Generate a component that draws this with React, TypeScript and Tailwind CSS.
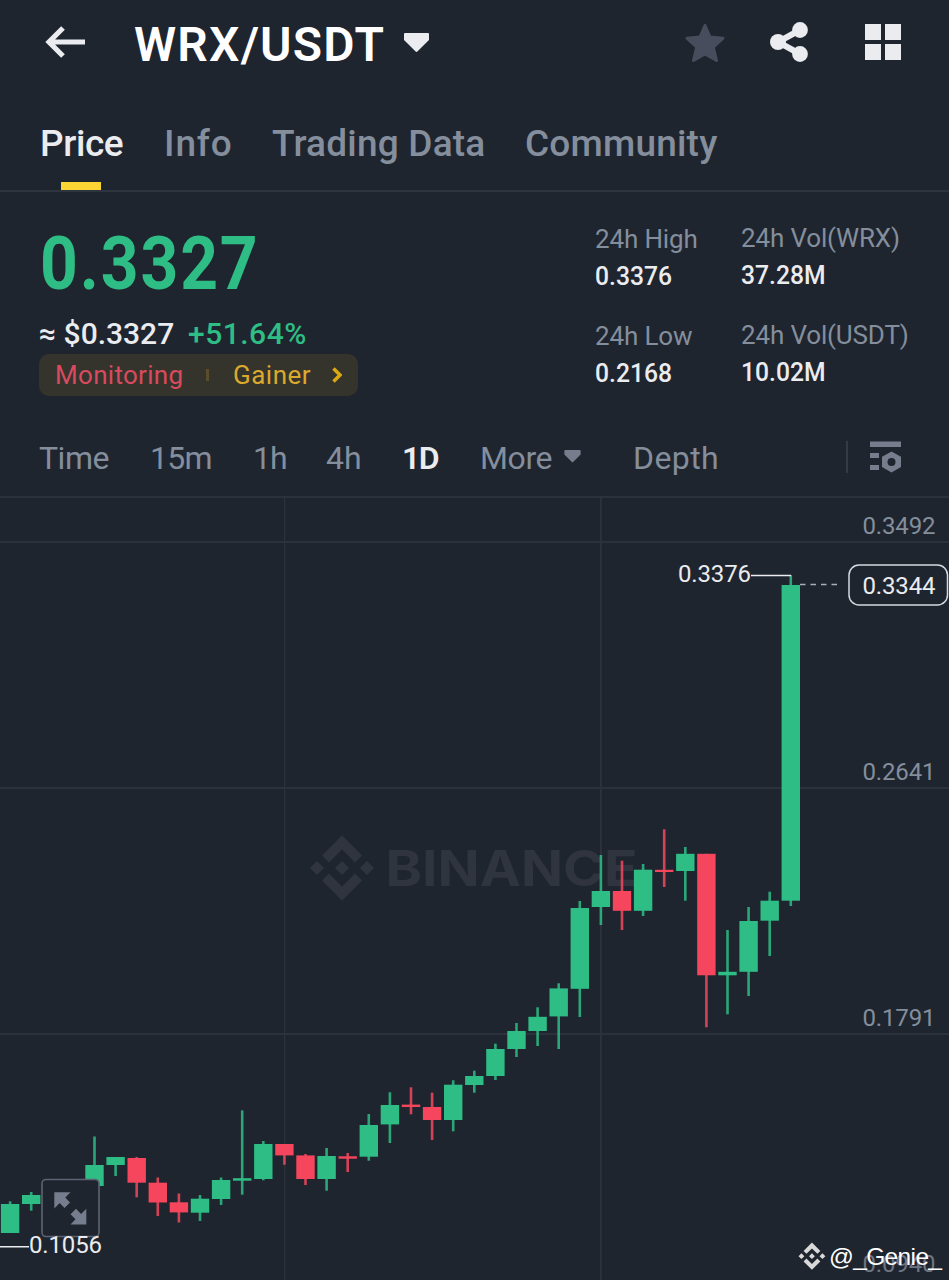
import React from "react";

type Candle = [top: number, bottom: number, high: number, low: number, up: 0 | 1];

// Pixel rows of each candle: body top, body bottom, wick top, wick bottom, rising
const candles: (Candle | null)[] = [
  [1204, 1233, 1201.3, 1233, 1],
  [1195, 1204, 1192, 1210.7, 1],
  null,
  null,
  [1165, 1186, 1136.5, 1186, 1],
  [1157, 1165, 1157, 1176, 1],
  [1158, 1182.7, 1157, 1197.3, 0],
  [1182.7, 1202.5, 1177.5, 1216, 0],
  [1202.3, 1212.4, 1193.5, 1222.5, 0],
  [1198.7, 1212.7, 1195, 1221, 1],
  [1180, 1199, 1177.5, 1205, 1],
  [1178.2, 1180.7, 1110.4, 1194.7, 1],
  [1144, 1179, 1141, 1180.3, 1],
  [1144, 1155.4, 1144, 1164.7, 0],
  [1155.4, 1179, 1154, 1185, 0],
  [1156, 1179, 1148, 1190.7, 1],
  [1156.3, 1158.7, 1153, 1172, 0],
  [1125, 1156.7, 1114, 1160.7, 1],
  [1105, 1124.4, 1092.3, 1143, 1],
  [1104.6, 1107, 1087.3, 1114.3, 0],
  [1107, 1120, 1092.7, 1140, 0],
  [1084.7, 1120, 1080.3, 1131.3, 1],
  [1076, 1085, 1070.7, 1092.7, 1],
  [1049, 1076, 1043.7, 1080, 1],
  [1031, 1049, 1023, 1057, 1],
  [1016.8, 1031, 1007.3, 1046, 1],
  [988.4, 1016.4, 983.3, 1049, 1],
  [908, 988.8, 901, 1017, 1],
  [891, 907, 855, 925, 1],
  [891, 910.8, 860.7, 930, 0],
  [869.7, 910.8, 864, 916, 1],
  [869.8, 872, 829.3, 887, 0],
  [853.8, 871, 847, 900.7, 1],
  [853.8, 975.3, 853.8, 1027.3, 0],
  [971.8, 975.3, 930, 1014.3, 1],
  [921, 971.8, 907, 996, 1],
  [900.7, 920.7, 891.7, 956, 1],
  [585, 900.7, 575, 906, 1],
];

const Caret = ({ className }: { className: string }) => (
  <svg viewBox="0 0 25 20" className={className} fill="currentColor">
    <path d="M0 1Q0 0 1 0H24Q25 0 25 1V7L13.4 18.6Q12.5 19.5 11.6 18.6L0 7Z" />
  </svg>
);

const BinanceMark = () => (
  <>
    <path d="M32 0 52 20 45 27 32 14 19 27 12 20Z" />
    <path d="M32 65 52 45 45 38 32 51 19 38 12 45Z" />
    <path d="M7 25.5 14 32.5 7 39.5 0 32.5Z" />
    <path d="M57 25.5 64 32.5 57 39.5 50 32.5Z" />
    <path d="M32 25.5 39 32.5 32 39.5 25 32.5Z" />
  </>
);

function Header() {
  return (
    <header className="flex h-[88px] items-center pl-[45px]">
      <svg viewBox="0 0 41 32" className="mb-[4px] h-8 w-[41px] shrink-0" fill="none" stroke="#eaecef" strokeWidth="5.2">
        <path d="M40 16H4M18 2 4 16 18 30" />
      </svg>
      <h1 className="ml-[48px] w-[270px] shrink-0 pt-px text-[48px] leading-none font-semibold tracking-[1.2px] text-white">
        WRX/USDT
      </h1>
      <Caret className="mb-[2px] h-5 w-[25px] shrink-0 text-[#eaecef]" />
      <svg viewBox="0 0 40 40" className="mb-[2px] ml-[256px] h-10 w-10 shrink-0 text-[#474d5c]">
        <path
          d="M20 2.5 25 14 38 15.2 28.3 24.2 31.5 37.5 20 31 8.5 37.5 11.7 24.2 2 15.2 15 14Z"
          fill="currentColor"
          stroke="currentColor"
          strokeWidth="3"
          strokeLinejoin="round"
        />
      </svg>
      <svg viewBox="0 0 38 40" className="mb-[4px] ml-[45px] h-10 w-[38px] shrink-0" fill="#eaecef" stroke="#eaecef">
        <path d="M30 8 8 20 30 32" fill="none" strokeWidth="6" />
        <circle cx="30" cy="8" r="7.9" stroke="none" />
        <circle cx="8" cy="20" r="8" stroke="none" />
        <circle cx="30" cy="32" r="7.9" stroke="none" />
      </svg>
      <div className="mb-[4px] ml-[57px] grid w-9 shrink-0 grid-cols-2 gap-1">
        <i className="h-4 bg-[#eaecef]" />
        <i className="h-4 bg-[#eaecef]" />
        <i className="h-4 bg-[#eaecef]" />
        <i className="h-4 bg-[#eaecef]" />
      </div>
    </header>
  );
}

function Tabs() {
  return (
    <nav className="flex h-[104px] items-stretch border-b-2 border-[#2c343e] pl-10 text-[37px] leading-none font-medium text-[#848e9c]">
      <div className="flex w-[124px] flex-col justify-between pt-[37px]">
        <span className="tracking-[-0.4px] text-[#eaecef]">Price</span>
        <i className="ml-[21px] h-2 w-10 bg-[#fcd535]" />
      </div>
      <span className="w-[108px] pt-[37px] tracking-[0.9px]">Info</span>
      <span className="w-[253px] pt-[37px] tracking-[0.2px]">Trading Data</span>
      <span className="pt-[37px] tracking-[0.2px]">Community</span>
    </nav>
  );
}

const Stat = ({ label, value }: { label: string; value: string }) => (
  <div className="h-[97px] whitespace-nowrap">
    <div className="text-[26px] leading-[38px] tracking-[-0.15px] text-[#848e9c]">{label}</div>
    <div className="origin-left scale-x-95 text-[26px] leading-[37px] font-medium text-[#eaecef]">{value}</div>
  </div>
);

function Summary() {
  return (
    <section className="flex h-[228px] pl-[39px]">
      <div className="w-[556px] pt-[33px]">
        <div className="ml-px origin-left scale-x-[.88] text-[75px] leading-[76px] font-bold tracking-[2.1px] text-[#2ebd85]">
          0.3327
        </div>
        <div className="mt-[14px] flex h-[39px] items-center pb-[2px] text-[30px] leading-none font-medium whitespace-nowrap">
          <span className="w-[149px] tracking-[0px] text-[#eaecef]">≈ $0.3327</span>
          <span className="tracking-[0.5px] text-[#2ebd85]">+51.64%</span>
        </div>
        <div className="flex h-[42px] w-[319px] items-center rounded-[10px] bg-[#35342c] pl-4 text-[26px] leading-none">
          <span className="w-[151px] tracking-[0.3px] text-[#d94a5f]">Monitoring</span>
          <i className="h-3 w-[3px] bg-[#5a4d29]" />
          <span className="ml-[24px] w-[99px] tracking-[0.5px] text-[#dba92d]">Gainer</span>
          <svg viewBox="0 0 10 16" className="h-4 w-[10px]" fill="none" stroke="#dca811" strokeWidth="3.5">
            <path d="M1.5 1.5 8 8 1.5 14.5" />
          </svg>
        </div>
      </div>
      <div className="w-[146px] pt-[28px]">
        <Stat label="24h High" value="0.3376" />
        <Stat label="24h Low" value="0.2168" />
      </div>
      <div className="pt-[26.5px]">
        <Stat label="24h Vol(WRX)" value="37.28M" />
        <Stat label="24h Vol(USDT)" value="10.02M" />
      </div>
    </section>
  );
}

function Intervals() {
  return (
    <nav className="flex h-[76px] items-center pl-[39px] text-[32px] leading-none whitespace-nowrap text-[#848e9c]">
      <span className="w-[111px] tracking-[-0.5px]">Time</span>
      <span className="w-[103px] tracking-[-0.7px]">15m</span>
      <span className="w-[73px] tracking-[-1px]">1h</span>
      <span className="w-[76px] tracking-[0px]">4h</span>
      <span className="w-[78px] font-semibold tracking-[-1.5px] text-[#eaecef]">1D</span>
      <span className="w-[84px] tracking-[-0.4px]">More</span>
      <Caret className="mb-[4px] h-[13px] w-[17px] text-[#767d8d]" />
      <span className="ml-[52px] w-[213px] tracking-[0.4px]">Depth</span>
      <i className="mb-[3px] h-8 w-[2px] bg-[#343b47]" />
      <svg viewBox="0 0 31 32" className="mb-[2px] ml-[22px] h-8 w-[31px]" fill="#767d8d">
        <path d="M0 .5H31V6H0ZM0 12H9V17H0ZM0 24H9V29H0Z" />
        <path
          fillRule="evenodd"
          d="M21.5 10.500 31 15.800V26L21.500 31.500 12 26V15.800ZM21.500 17A4 4 0 1 0 21.500 25A4 4 0 1 0 21.500 17Z"
        />
      </svg>
    </nav>
  );
}

function Chart() {
  return (
    <svg viewBox="0 496 949 784" className="block h-[784px] w-[949px]" fontFamily="Roboto, sans-serif" fontSize="24">
      <g fill="#2b323c">
        <rect x="0" y="496" width="949" height="2" />
        <rect x="0" y="541" width="949" height="2" />
        <rect x="0" y="787" width="949" height="2" />
        <rect x="0" y="1033" width="949" height="2" />
        <rect x="284" y="498" width="1.3" height="782" />
        <rect x="600" y="498" width="1.8" height="782" />
      </g>
      <g fill="#2f343f">
        <g transform="translate(310 835.5)">
          <BinanceMark />
        </g>
        <text
          x="385.5"
          y="885.5"
          fontFamily="Inter, sans-serif"
          fontWeight="700"
          fontSize="50"
          textLength="252"
          lengthAdjust="spacingAndGlyphs"
        >
          BINANCE
        </text>
      </g>
      {candles.map((c, i) => {
        if (!c) return null;
        const [top, bottom, high, low, up] = c;
        const x = 10.1 + i * 21.1;
        return (
          <g key={i} fill={up ? "#2ebd85" : "#f6465d"}>
            <rect x={x - 1.3} y={high} width="2.6" height={low - high} opacity="0.85" />
            <rect x={x - 9.2} y={top} width="18.4" height={bottom - top} />
          </g>
        );
      })}
      <g fill="#848e9c">
        <text x="862.5" y="534" textLength="73">0.3492</text>
        <text x="862.5" y="780" textLength="73">0.2641</text>
        <text x="862.5" y="1026" textLength="73">0.1791</text>
        <text x="862.5" y="1272" textLength="73" fill="#6d7482">0.0940</text>
      </g>
      <path d="M751 575.5H791" stroke="#eaecef" strokeWidth="1.5" />
      <path d="M800 584.5H838" stroke="#a9afb8" strokeWidth="1.6" strokeDasharray="5.5 5" />
      <rect x="849" y="565" width="98.5" height="40" rx="10" fill="#1f252f" stroke="#d5d9df" strokeWidth="1.5" />
      <rect x="42" y="1179.5" width="57" height="57" rx="4" fill="#1f252f" stroke="#5d6370" strokeWidth="1.6" />
      <g fill="#767d8d">
        <path d="M54.3 1192.300H70.500L65.300 1197.500 70 1202.500 64.500 1208 59.700 1203 54.300 1208.500Z" />
        <path d="M86.300 1224.500H70.500L75.500 1219.300 70.500 1214.200 76 1208.800 81 1214 86.300 1208.800Z" />
      </g>
      <g fill="#eaecef">
        <text x="678" y="582" textLength="73">0.3376</text>
        <text x="862.5" y="594" textLength="73">0.3344</text>
        <rect x="0" y="1246" width="29" height="1.5" />
        <text x="29" y="1253" textLength="73">0.1056</text>
      </g>
      <g transform="translate(798.5 1242.500) scale(.42)" fill="#d9d9d9">
        <BinanceMark />
      </g>
      <text x="829" y="1265" fill="#fff" fontFamily="Liberation Sans, sans-serif" fontSize="24.500" textLength="113">
        @_Genie_
      </text>
    </svg>
  );
}

export default function App() {
  return (
    <main className="h-[1280px] w-[949px] overflow-hidden bg-[#1f252f] font-['Roboto',sans-serif]">
      <Header />
      <Tabs />
      <Summary />
      <Intervals />
      <Chart />
    </main>
  );
}
